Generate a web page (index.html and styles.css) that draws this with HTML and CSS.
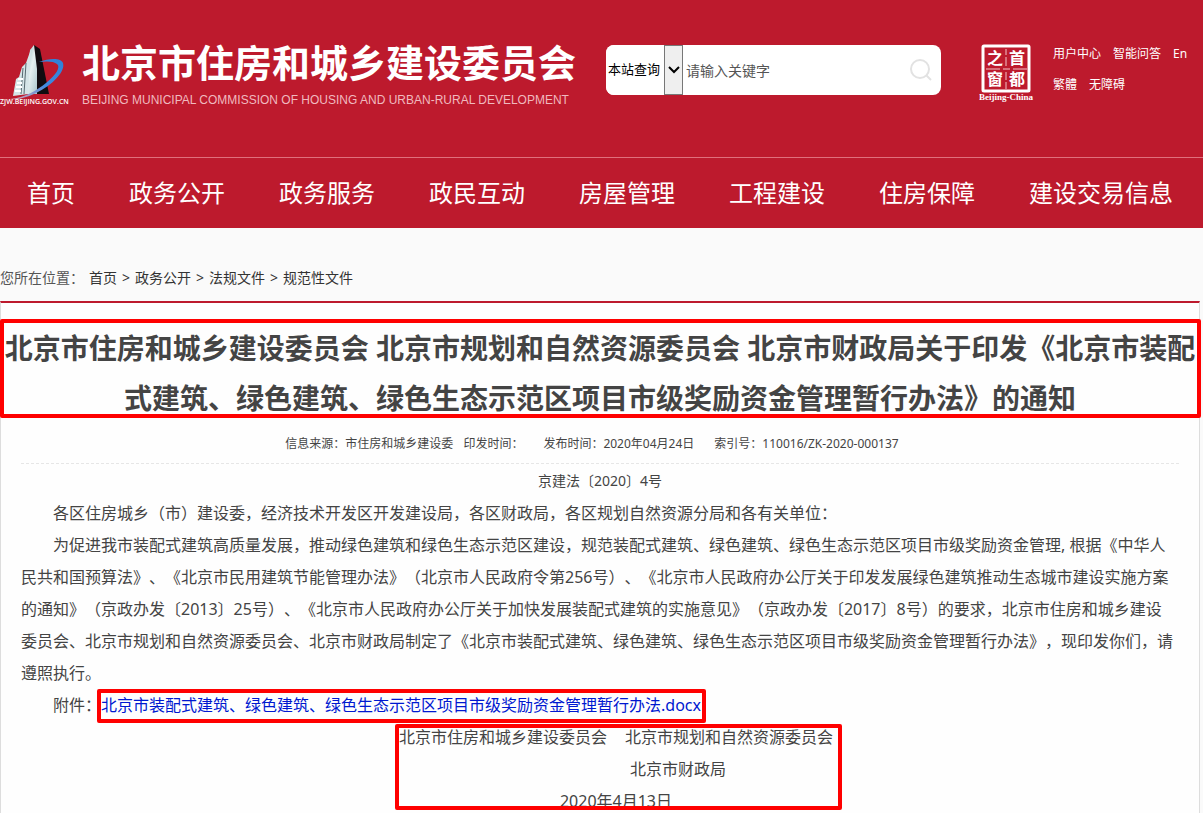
FILE: index.html
```
<!DOCTYPE html>
<html lang="zh-CN">
<head>
<meta charset="utf-8">
<title>北京市住房和城乡建设委员会</title>
<link rel="stylesheet" href="styles.css">
</head>
<body>
<header class="site-header">
  <div class="masthead wrap">
    <a class="brand" href="#">
      <svg class="brand-mark" width="72" height="66" viewBox="0 0 72 66" aria-hidden="true">
        <defs>
          <linearGradient id="face" x1="0" y1="0" x2="1" y2="1">
            <stop offset="0" stop-color="#8fb4b8"/><stop offset=".5" stop-color="#e6f1f1"/><stop offset="1" stop-color="#a9c6ca"/>
          </linearGradient>
          <linearGradient id="orbit" x1="1" y1="0" x2="0" y2="1">
            <stop offset="0" stop-color="#2f7fd6"/><stop offset=".5" stop-color="#3f8be0"/><stop offset="1" stop-color="#e7a6b4"/>
          </linearGradient>
        </defs>
        <path d="M34 4 40 8 49 53 36 53Z" fill="#100c10"/>
        <path d="M30 9 34 4 37 28 37 53 25 53Z" fill="url(#face)"/>
        <path d="M26 22 31 8 28 53 13 55 16 38 19 36 22 26Z" fill="#d5e5e8"/>
        <path d="M23 27 21 53M26 22 24 53" stroke="#55686e" fill="none"/>
        <path d="M18 38h5M17 42h5M16 46h6M15 50h6" stroke="#fff" stroke-width="2"/>
        <path d="M39 21C50 17 61 17 63 22C66 32 48 47 34 53C25 57 17 59 10 58C25 57 37 49 46 42C56 34 61 26 57 23C54 20 46 20 39 21Z" fill="url(#orbit)"/>
        <text class="brand-url" x="0" y="63">ZJW.BEIJING.GOV.CN</text>
      </svg>
      <span class="brand-names">
        <span class="brand-zh">北京市住房和城乡建设委员会</span>
        <span class="brand-en">BEIJING MUNICIPAL COMMISSION OF HOUSING AND URBAN-RURAL DEVELOPMENT</span>
      </span>
    </a>
    <form class="search">
      <span class="scope">
        <select class="scope-select" aria-label="查询范围"><option>本站查询</option></select>
        <span class="scope-arrow"><svg width="12" height="8" viewBox="0 0 12 8" aria-hidden="true"><path d="M1 1 6 6 11 1" fill="none" stroke="#000" stroke-width="2"/></svg></span>
      </span>
      <input class="search-input" type="text" placeholder="请输入关键字" aria-label="请输入关键字">
      <button class="search-button" type="button" aria-label="搜索">
        <svg width="24" height="24" viewBox="0 0 24 24" aria-hidden="true"><circle cx="11" cy="11" r="9" fill="none" stroke="#e2e2e2" stroke-width="2"/><path d="M17 17 22 22" stroke="#e2e2e2" stroke-width="2"/></svg>
      </button>
    </form>
    <a class="capital" href="#" aria-label="首都之窗">
      <svg width="56" height="60" viewBox="0 0 56 60">
        <rect x="4" y="2" width="46" height="45" rx="1" fill="none" stroke="#fff" stroke-width="3"/>
        <path d="M27 5V11M27 13V22M27 28V36M27 38V45M7 25H21M24 25H31M34 25H48" stroke="#f3c3c8" fill="none"/>
        <g class="capital-seal">
          <text x="16" y="20">之</text><text x="38" y="20">首</text>
          <text x="16" y="41">窗</text><text x="38" y="41">都</text>
        </g>
        <text class="capital-name" x="27" y="56">Beijing-China</text>
      </svg>
    </a>
    <div class="tools">
      <div class="tools-row"><a href="#">用户中心</a><a href="#">智能问答</a><a href="#">En</a></div>
      <div class="tools-row"><a href="#">繁體</a><a href="#">无障碍</a></div>
    </div>
  </div>
  <nav class="main-nav">
    <div class="nav-list wrap">
      <a href="#">首页</a><a href="#">政务公开</a><a href="#">政务服务</a><a href="#">政民互动</a><a href="#">房屋管理</a><a href="#">工程建设</a><a href="#">住房保障</a><a href="#">建设交易信息</a>
    </div>
  </nav>
</header>
<main class="wrap">
  <div class="crumbs">
    <span class="crumbs-label">您所在位置：</span>
    <a href="#">首页</a><span>&gt;</span><a href="#">政务公开</a><span>&gt;</span><a href="#">法规文件</a><span>&gt;</span><a href="#">规范性文件</a>
  </div>
  <article class="article">
    <h1 class="title marked">北京市住房和城乡建设委员会 北京市规划和自然资源委员会 北京市财政局关于印发《北京市装配式建筑、绿色建筑、绿色生态示范区项目市级奖励资金管理暂行办法》的通知</h1>
    <div class="content">
      <div class="meta"><span>信息来源：市住房和城乡建设委</span><span>印发时间：</span><span class="meta-date">发布时间：2020年04月24日</span><span class="meta-index">索引号：110016/ZK-2020-000137</span></div>
      <p class="doc-number">京建法〔2020〕4号</p>
      <p>各区住房城乡（市）建设委，经济技术开发区开发建设局，各区财政局，各区规划自然资源分局和各有关单位：</p>
      <p>为促进我市装配式建筑高质量发展，推动绿色建筑和绿色生态示范区建设，规范装配式建筑、绿色建筑、绿色生态示范区项目市级奖励资金管理, 根据《中华人民共和国预算法》、《北京市民用建筑节能管理办法》（北京市人民政府令第256号）、《北京市人民政府办公厅关于印发发展绿色建筑推动生态城市建设实施方案的通知》（京政办发〔2013〕25号）、《北京市人民政府办公厅关于加快发展装配式建筑的实施意见》（京政办发〔2017〕8号）的要求，北京市住房和城乡建设委员会、北京市规划和自然资源委员会、北京市财政局制定了《北京市装配式建筑、绿色建筑、绿色生态示范区项目市级奖励资金管理暂行办法》，现印发你们，请遵照执行。</p>
      <p>附件：<a class="attachment marked" href="#">北京市装配式建筑、绿色建筑、绿色生态示范区项目市级奖励资金管理暂行办法.docx</a></p>
      <div class="signature-row">
        <div class="signature marked">
          <div class="signers"><span>北京市住房和城乡建设委员会</span><span>北京市规划和自然资源委员会</span></div>
          <div class="cosigner">北京市财政局</div>
          <div>2020年4月13日</div>
        </div>
      </div>
    </div>
  </article>
</main>
</body>
</html>
```
FILE: styles.css
```
* { box-sizing: border-box; }
body {
  margin: 0;
  background: #fafafa;
  color: #444;
  font-family: "Noto Sans", "Noto Sans CJK SC", sans-serif;
  font-size: 16px;
  text-spacing-trim: space-all;
}
a { color: inherit; text-decoration: none; }
p { margin: 0; }
.wrap { max-width: 1200px; }

.site-header { background: #bd1a2d; color: #fff; }
.masthead {
  display: flex;
  align-items: flex-start;
  padding: 41px 12px 0 0;
  min-height: 157px;
}
.brand { display: flex; gap: 10px; width: 606px; }
.brand-mark { flex: none; }
.brand-url { font: 600 7px "Open Sans", sans-serif; fill: #fff; }
.brand-names { display: flex; flex-direction: column; white-space: nowrap; }
.brand-zh {
  font-family: "Noto Sans CJK SC", sans-serif;
  font-size: 38px;
  font-weight: bold;
  line-height: 40px;
}
.brand-en {
  margin-top: 9px;
  color: #f0b9bf;
  font-family: "Liberation Sans", sans-serif;
  font-size: 12px;
  line-height: 20px;
}

.search {
  display: flex;
  width: 335px;
  height: 50px;
  margin: 4px 38px 0 0;
  background: #fff;
  border-radius: 8px;
  overflow: hidden;
}
.scope { position: relative; flex: none; width: 77px; }
.scope-select {
  width: 100%;
  height: 100%;
  padding: 0 20px 2px 2px;
  border: 0;
  appearance: none;
  background: #fff;
  color: #000;
  font-family: inherit;
  font-size: 13px;
}
.scope-arrow {
  position: absolute;
  top: 0;
  right: 0;
  bottom: 0;
  display: grid;
  place-items: center;
  width: 19px;
  border: 1px solid #777;
  background: #efefef;
  pointer-events: none;
}
.search-input {
  flex: 1;
  min-width: 0;
  padding: 0 3px;
  border: 0;
  background: none;
  font-family: inherit;
  font-size: 14px;
}
.search-input::placeholder { color: #555; }
.search-button {
  display: grid;
  place-items: center;
  width: 40px;
  padding: 0;
  border: 0;
  background: none;
}
.capital { flex: none; width: 56px; margin: 3px 18px 0 0; }
.capital-seal {
  fill: #fff;
  font: bold 16px "Noto Sans CJK SC", sans-serif;
  text-anchor: middle;
}
.capital-name {
  fill: #fff;
  font: bold 9px "Liberation Serif", serif;
  text-anchor: middle;
}
.tools { font-size: 12px; line-height: 31px; margin-top: -3px; }
.tools-row { display: flex; gap: 12px; white-space: nowrap; }

.main-nav { border-top: 1px solid #e0707c; }
.nav-list { display: flex; font-size: 24px; line-height: 70px; }
.nav-list a { padding: 0 27px; white-space: nowrap; }

.crumbs {
  display: flex;
  gap: 5px;
  padding: 27px 0 0;
  height: 73px;
  color: #333;
  font-size: 14px;
  line-height: 46px;
}
.crumbs-label { color: #555; }

.article {
  border: 1px solid #ddd;
  border-top: 2px solid #bd1a2d;
  border-bottom: 0;
  background: #fefefe;
}
.marked { position: relative; }
.marked::after {
  content: "";
  position: absolute;
  border: 4px solid #f00;
  border-radius: 2px;
  pointer-events: none;
}
.title {
  margin: 0;
  padding-top: 20px;
  color: #444;
  font-size: 28px;
  line-height: 50px;
  text-align: center;
}
.title::after { inset: 16px -2px 5px -1px; }
.content { padding: 0 20px; }
.content p { padding-right: 3px; line-height: 32px; text-indent: 2em; }
.meta {
  display: flex;
  justify-content: center;
  gap: 10px;
  margin-bottom: 1px;
  padding: 2px 16px 0 0;
  border-bottom: 1px dashed #e6e6e6;
  font-size: 12px;
  line-height: 38px;
}
.meta-date, .meta-index { margin-left: 10px; }
.content .doc-number { padding: 0; font-size: 14px; text-align: center; text-indent: 0; }
.attachment { display: inline-block; color: #0018d0; text-indent: 0; }
.attachment::after { inset: 0 -5px -2px -4px; }
.signature-row { display: flex; justify-content: center; padding-left: 32px; }
.signature { line-height: 32px; text-align: center; }
.signature::after { inset: 3px -9px 7px -4px; }
.signers { display: flex; gap: 18px; }
.cosigner { padding-left: 124px; }
```
